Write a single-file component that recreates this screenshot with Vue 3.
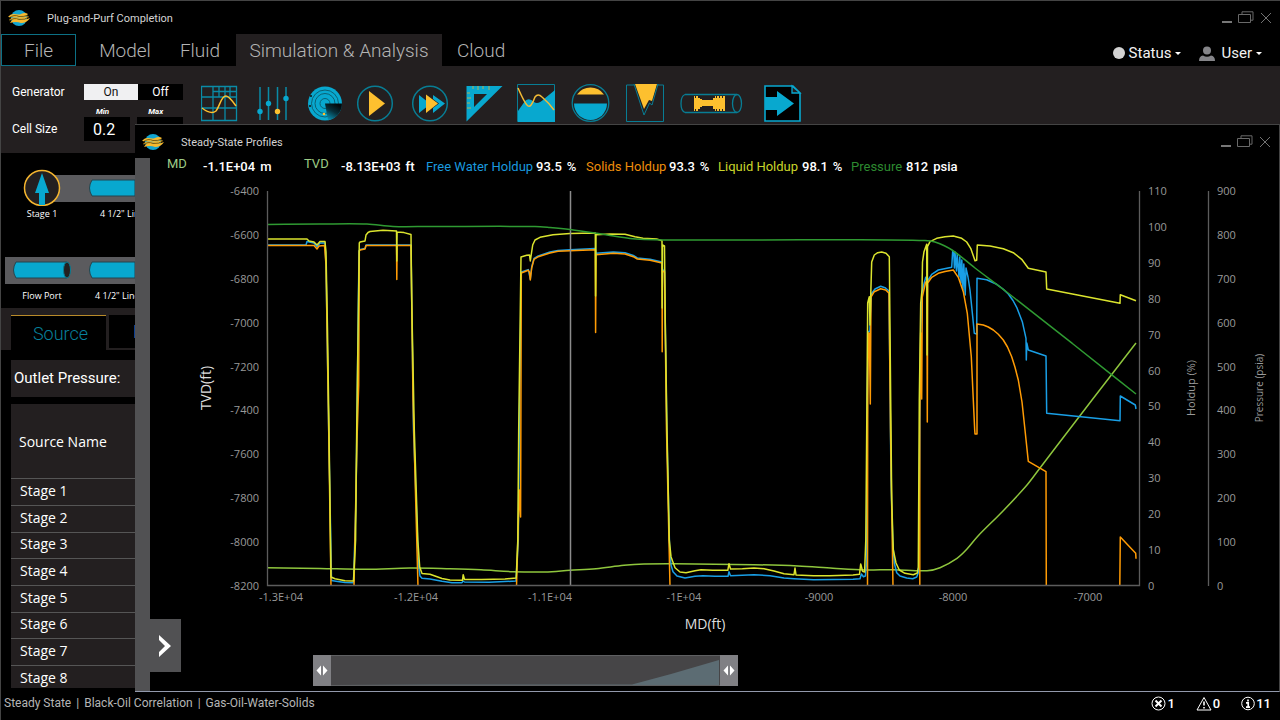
<script setup>
import { ref } from 'vue'

const menus = [
  { name: 'File', cls: 'file' },
  { name: 'Model', cls: 'model' },
  { name: 'Fluid', cls: 'fluid' },
  { name: 'Simulation & Analysis', cls: 'active' },
  { name: 'Cloud', cls: 'cloud' },
]
const generator = ref('On')
const minSize = ref('0.2')
const maxSize = ref('')
const stages = [1, 2, 3, 4, 5, 6, 7, 8].map((n) => `Stage ${n}`)

const readouts = [
  { label: 'MD', value: '-1.1E+04', unit: 'm', cls: 'depth' },
  { label: 'TVD', value: '-8.13E+03', unit: 'ft', cls: 'depth' },
  { label: 'Free Water Holdup', value: '93.5', unit: '%', cls: 'water' },
  { label: 'Solids Holdup', value: '93.3', unit: '%', cls: 'solids' },
  { label: 'Liquid Holdup', value: '98.1', unit: '%', cls: 'liquid' },
  { label: 'Pressure', value: '812', unit: 'psia', cls: 'pressure' },
]

const tvdTicks = Array.from({ length: 10 }, (_, i) => ({ t: String(-6400 - i * 200), y: 191 + (i * 395) / 9 }))
const holdupTicks = Array.from({ length: 12 }, (_, i) => ({ t: String(110 - i * 10), y: 191 + (i * 395) / 11 }))
const pressureTicks = Array.from({ length: 10 }, (_, i) => ({ t: String(900 - i * 100), y: 191 + (i * 395) / 9 }))
const mdTicks = [
  { t: '-1.3E+04', x: 281 }, { t: '-1.2E+04', x: 416 }, { t: '-1.1E+04', x: 550 }, { t: '-1E+04', x: 684 },
  { t: '-9000', x: 819 }, { t: '-8000', x: 953 }, { t: '-7000', x: 1088 },
]

// Turns a list of points into a smooth path that passes through each of them.
function smooth(points) {
  const p = points.split(' ').map((s) => s.split(',').map(Number))
  const slope = (i) => {
    const a = p[Math.max(i - 1, 0)]
    const b = p[Math.min(i + 1, p.length - 1)]
    return (b[1] - a[1]) / (b[0] - a[0])
  }
  let d = `M${p[0]}`
  for (let i = 1; i < p.length; i++) {
    const h = (p[i][0] - p[i - 1][0]) / 3
    d += `C${p[i - 1][0] + h},${p[i - 1][1] + h * slope(i - 1)} ${p[i][0] - h},${p[i][1] - h * slope(i)} ${p[i]}`
  }
  return d
}

const pressure = smooth('267,224.5 320,224 367,224 393,226.5 430,226.5 535,226.5 550,227.5 570,229.5 595,233 610,235.5 630,238.5 645,239.5 664,240 760,240 860,239.7 925,240.5 935,242 952,250 975,268 1008,293 1073,344 1136,394')
const tvd = smooth('267,567.7 320,568.5 367,569.3 410,568 450,568.7 481,569.7 513,571.7 545,572 570,570.3 596,568.7 624,565.3 644,564 675,563.7 754,564.7 798,566 833,568.3 865,570 893,569.7 927,570.7 940,567.7 957,558.3 967,549 978,536 1003,511 1027,485 1040,468 1092,400 1136,343')

const liquid = '267,239 307,239 309,241 314,242 317,245 320,241.5 325,241.5 326,252 327.5,330 329,430 331,577 335,578.7 345,580.7 353.5,581 355.6,540 356.7,430 359.3,243 360,242 365,241 366,235 368,232.5 370,231.5 383,230.3 396.5,231 396.8,261 397.1,232 404,232.6 411,234.5 411.7,300 414.3,430 417.8,540 419.7,567 422,573.5 430,574.3 442,578.5 450,580 462.5,580.3 463.2,574.7 464.5,579.5 481.5,579.6 505,579 516.2,578 517.8,540 518.7,430 521,257 526.7,255.3 529.5,255 530.3,261 532.7,245 535,240 540,237.3 553,234.7 570,233.5 595.3,233 595.6,296 596,234.7 610,234 625,234.3 635,236.7 643,238.3 656.7,239 662,240.7 662.2,308 662.5,245 664.5,246 665.3,323 667,430 669.3,540 671,556.7 675,567.7 680,572 686,572.7 695,570.7 701,569.7 712.7,570.3 727.8,570.3 729,563.7 730.5,569 742.4,568.7 754,568 764,568.7 774,571 784,573.7 794,574.7 795,568 796,575 813.6,575.7 829.5,575.7 853,575 859.5,574.3 860.7,564 862.6,571.3 864.6,572 865.8,540 866.7,430 867.7,303 869.3,296.7 870,325 870.7,296 871.7,262 874.3,255 877.7,252.7 881.7,252 886,253.3 889.3,256.7 890.7,400 891.7,500 893.3,550 896,563 899.3,570 905,573.3 913.3,574.7 917.3,573 918.3,567 919.3,400 920.7,303 922,290 922.5,262 924,251.7 926.7,244.3 927.1,355 927.5,246.7 930,241.7 936.7,238.3 945,236.8 953.3,236 961.7,238.3 966.7,242 970.7,248.3 974,257.7 975,260.7 976.7,260.3 977.3,245 990,246 1003.3,248.7 1013.3,252.7 1021.7,259.3 1028.3,268.3 1046,272 1046.7,289 1120,303.3 1120.3,294.7 1136,300.7'

const solids = '267,245.5 314,245.5 317,249 319,246 324.5,245.5 326,265 328.7,430 331,586.5 354,586.5 357,440 358.7,385 359.3,251 360,250 365,249 366,245.5 396.5,245.5 396.8,279.5 397.1,245.5 411,245.5 413,400 418,586.5 516.5,586.5 519.3,490 520.6,517 521.3,273 528.3,270.3 529.4,272 530.3,280 531.7,268 534,259.3 538.3,256.7 550,253 558,251.3 570,250.7 595.3,249.7 595.6,332.5 596,254.7 613.3,253.3 625,254 633.3,256.7 637.3,259 650,260.3 662,263 662.2,351.7 662.5,271 664.5,272 666.5,430 670,586.5 867.5,586.5 867.7,420 868.3,333 869.3,333 870.3,404 871,297 874.3,291.7 880.7,288.7 885.7,290 889,293.3 890.5,430 893,586.5 919.8,586.5 919.8,420 920.7,333 921.7,399 922.3,297 925.7,282 926.9,282 927.3,422 927.7,283 931.7,277.3 938.3,273.3 945,271.5 953.3,270 958.3,277.3 963.3,291.7 967.3,313.3 971.3,356.7 974.7,430 975,434 977,434 977,324 983.3,325 988.3,327 993.3,330 998.3,334.3 1003.3,340 1007.5,347 1011.7,356.7 1015,367.3 1018.3,380 1022,402 1025,430 1028.3,461.3 1046,471.7 1046.3,586.5 1119.8,586.5 1120.3,537 1135.7,553.3 1136,558.7'

const water = '267,245 306,245 307,241.5 314,243 317,246.8 320,243 325,243 326,265 328.7,430 331.5,580.5 336,581.2 345,582.5 353.5,582.7 356,500 359,251 360,249.5 365,248.5 366,245 411,245 413.5,430 418.5,565 420,576 422,578.3 430,579 442,581.3 452,582.7 462,582.7 463,581 464.5,582 489,582.3 516,581 518.3,540 519.3,430 521.3,272 528.3,269.6 530.3,279 531.7,267 534,258.5 538.3,256 550,252 558,250.5 570,249.8 595.3,248.5 596,253.3 613.3,252 625,252.7 633.3,255.5 637.3,258 650,259.2 662,262 662.5,270 664.5,270.5 666.8,430 669.5,545 671,565 673,571.7 677,576 685,578 695,576.3 703,575.7 715,576.3 728,576.3 729,571.7 730.5,575.7 754,574.7 770,575.7 784,578 794,578.7 813.6,579.7 853,579.3 860,578.7 861.4,574 863.4,576.7 865.4,576 866.6,561.7 867.2,400 868.3,331.5 869.8,331.5 871.3,294 875,289 880.7,286.3 885,287.7 889,291 891,480 892.7,540 894.3,563 896.7,572.7 900,576 906.7,578 912.7,578.7 916.7,577 918.7,571.7 920,400 920.7,332 922,292 925.7,277.3 927.5,281 931.7,274.3 938.3,270 951.7,267.3 952.7,251 953.8,252 954.4,268 955,252 956.5,271 957.2,254 959,277 959.8,257 961,283 961.8,260 963,290 963.8,264 965.2,295 966,268 968,277 970,290 972.7,316.7 974.3,333.3 976.7,334 977,278.3 986.7,279.7 996.7,284.3 1003,289 1008.3,294 1013,300.500 1016.7,307.3 1022.3,321.7 1026,338.3 1026.3,360 1026.8,343 1028.3,350 1046,356 1046.7,413.3 1120,420.7 1120.3,396 1135.3,405 1136,409'
</script>

<template>
  <div class="app">
    <svg class="defs" width="0" height="0" aria-hidden="true">
      <symbol id="logo" viewBox="0 0 22 18">
        <circle cx="11" cy="9" r="8" fill="#12a5d0" />
        <path d="M0 8C5 2 9 7 13 5Q17 3 20 5Q17 9 12 9Q7 8 0 8Z" fill="#f7b92e" />
        <path d="M2 14Q5 9 10 10Q16 12 22 9Q19 14 13 14Q8 12 2 14Z" fill="#f7b92e" />
        <path d="M1 11C6 6 9 10 13 9Q17 8 21 7Q18 11 12 12Q7 10 1 11Z" fill="#f7b92e" />
        <path d="M1 9Q6 5 11 7.500Q16 8 20 6M1 12Q6 8 11 10.500Q17 11 21 8" fill="none" stroke="#57480d" stroke-width=".8" />
      </symbol>
      <symbol id="restore" viewBox="0 0 16 13">
        <path d="M.5 3.500h12v8H.5zM4 3V.8h11v8.400h-2" fill="none" stroke="#696969" />
      </symbol>
      <symbol id="close" viewBox="0 0 12 12">
        <path d="M1 1l10 10M11 1L1 11" stroke="#727272" fill="none" />
      </symbol>
      <symbol id="drag" viewBox="0 0 18 31">
        <path d="M8 10.500v10L3.500 15.500zM10 10.500v10l4.500-5z" fill="#fff" />
      </symbol>
    </svg>

    <header class="titlebar">
      <svg class="logo"><use href="#logo" /></svg>
      <h1>Plug-and-Purf Completion</h1>
      <div class="controls">
        <button aria-label="Minimize"><i class="minimize"></i></button>
        <button aria-label="Restore"><svg width="16" height="13"><use href="#restore" /></svg></button>
        <button aria-label="Close"><svg width="12" height="12"><use href="#close" /></svg></button>
      </div>
    </header>

    <nav class="menubar">
      <button v-for="m in menus" :key="m.name" :class="m.cls">{{ m.name }}</button>
      <div class="account">
        <button><i class="dot"></i>Status<i class="caret"></i></button>
        <button class="user">
          <svg width="16" height="15" viewBox="0 0 16 15"><circle cx="8" cy="4.500" r="4" fill="#858589" /><path d="M0 15Q0 10 4 9.500Q8 12 12 9.500Q16 10 16 15z" fill="#858589" /></svg>
          User<i class="caret"></i>
        </button>
      </div>
    </nav>

    <section class="toolbar">
      <div class="settings">
        <span>Generator</span>
        <div class="toggle">
          <button v-for="o in ['On', 'Off']" :key="o" :class="{ chosen: generator === o }" :aria-pressed="generator === o" @click="generator = o">{{ o }}</button>
        </div>
        <div class="bounds"><label for="min">Min</label><label for="max">Max</label></div>
        <span class="cell">Cell Size</span>
        <div class="sizes"><input id="min" v-model="minSize" /><input id="max" v-model="maxSize" /></div>
      </div>
      <div class="tools">
        <button aria-label="Profile grid">
          <svg width="42" height="38" viewBox="0 0 42 38" fill="none" stroke="#0a8ba6">
            <path d="M.5 2.500h35v34H.5zM12 2v35M24 2v35M0 13h35M0 24h35M12 7.500h23M18 2v11M29 2v11" stroke-width="1.300" />
            <path d="M1 24Q10 31 15 27C19 22 20 12 25 12Q28 12 35 22" stroke="#fdc02f" stroke-width="1.500" />
          </svg>
        </button>
        <button aria-label="Sensitivity">
          <svg width="36" height="38" viewBox="0 0 36 38">
            <path d="M3 3v33M11.500 3v33M20.500 3v33M29 3v33" stroke="#0a8ba6" stroke-width="1.500" />
            <g fill="#08a8cf"><circle cx="3" cy="27.500" r="2.700" /><circle cx="11.500" cy="19.500" r="2.700" /><circle cx="29" cy="14.500" r="2.700" /></g>
            <circle cx="20.500" cy="27.500" r="2.700" fill="#fdc02f" />
          </svg>
        </button>
        <button aria-label="Radar">
          <svg width="36" height="38" viewBox="0 0 36 38">
            <defs><linearGradient id="sweep" x1=".6" y1="0" x2="0" y2="1"><stop offset="0" stop-color="#04090b" /><stop offset=".4" stop-color="#06303b" /><stop offset="1" stop-color="#08a8cf" /></linearGradient></defs>
            <circle cx="18" cy="19.500" r="17" fill="#08a8cf" />
            <g fill="none" stroke="#0b6175"><circle cx="18" cy="19.500" r="13.500" /><circle cx="18" cy="19.500" r="10" /><circle cx="18" cy="19.500" r="5" /></g>
            <path d="M18 19.500h17a17 17 0 0 1-14 16.800z" fill="url(#sweep)" />
            <circle cx="17" cy="30" r="1.300" fill="#fdc02f" /><circle cx="4" cy="12" r="1" fill="#111" /><circle cx="3" cy="22" r="1" fill="#111" />
          </svg>
        </button>
        <button aria-label="Run">
          <svg width="40" height="38" viewBox="0 0 40 38"><circle cx="18" cy="19.500" r="17.300" fill="none" stroke="#087d94" stroke-width="1.500" /><path d="M12 7v25l16-12.500z" fill="#fdc02f" /></svg>
        </button>
        <button aria-label="Run all">
          <svg width="40" height="38" viewBox="0 0 40 38"><circle cx="19" cy="19.500" r="17.300" fill="none" stroke="#087d94" stroke-width="1.500" /><path d="M8 11v18l7-5.500v-7zM22 11v4l6 4.500-6 4.500v5l12-9.500z" fill="#08a8cf" /><path d="M15 10.500v18.500l12-9.500z" fill="#fdc02f" /></svg>
        </button>
        <button aria-label="Measure">
          <svg width="38" height="38" viewBox="0 0 38 38"><path d="M1.500 2h36L1.500 37.500zM9 10v13L22 10z" fill="#08a8cf" fill-rule="evenodd" /><path d="M8 2v3M13 2v4M18 2v3M24 2v4M2 9h3M2 14h4M2 19h3M2 24h4" stroke="#b5b050" /></svg>
        </button>
        <button aria-label="Area chart">
          <svg width="40" height="38" viewBox="0 0 40 38"><path d="M.5.500h37v37H.5z" fill="#231f20" stroke="#087d94" /><path d="M1 27L8 17Q12 13 17 18Q21 21 27 15L38 6v32H1z" fill="#08a8cf" /><path d="M1 4Q8 20 11 22Q14 24 18 13Q21 9 25 13Q32 19 37 26" fill="none" stroke="#f4bc35" stroke-width="1.500" /></svg>
        </button>
        <button aria-label="Cross section">
          <svg width="41" height="38" viewBox="0 0 41 38"><circle cx="19.500" cy="19" r="18.300" fill="none" stroke="#087d94" stroke-width="1.300" /><path d="M6 10.500a16.500 16.500 0 0 1 27 0z" fill="#fdc02f" /><path d="M3 19.500h33a16.500 16.500 0 0 1-33 0z" fill="#08a8cf" /></svg>
        </button>
        <button aria-label="Fracture">
          <svg width="40" height="38" viewBox="0 0 40 38"><path d="M8 1H.5v36.500h37V1H31" fill="none" stroke="#087d94" /><path d="M9 0h22l-5 17-3-1-5 9z" fill="#fdc02f" /><path d="M8 0l10 31 5.500-12 2.500 2L32 0" fill="none" stroke="#087d94" /></svg>
        </button>
        <button aria-label="Core">
          <svg width="70" height="38" viewBox="0 0 70 38"><g fill="none" stroke="#087d94" stroke-width="1.300"><path d="M5 10.500h52M5 28.500h52" /><path d="M5 10.500Q1 12 1 19.500T5 28.500" /><ellipse cx="57" cy="19.500" rx="4.500" ry="9" /></g><path d="M14 12h1v2h1v-2h2v2h2v1h2v1h11v-2h2v-2h1v2h1v-2h2v2h1v-2h2v2h1v-2h2v15h-2v-2h-1v2h-2v-2h-1v2h-2v-2h-1v2h-1v-2h-2v-3H22v1h-2v2h-2v2h-2v-2h-1v2h-1z" fill="#fdc02f" /></svg>
        </button>
        <button aria-label="Export">
          <svg width="38" height="38" viewBox="0 0 38 38"><path d="M1 2h28l7 7v28H1z" fill="#000" stroke="#08a8cf" stroke-width="1.600" /><path d="M28 2v7h8z" fill="#231f20" stroke="#08a8cf" stroke-width="1.300" /><path d="M1 13h12V7l17 12.500L13 32v-6H1z" fill="#08a8cf" /></svg>
        </button>
      </div>
    </section>

    <main>
      <aside class="side">
        <div class="schematic">
          <div class="segment">
            <svg class="pipes" height="44" viewBox="0 0 134 44">
              <path d="M41 13h93v27H41z" fill="#5b5b5e" />
              <path d="M134 18H91Q86 26 91 34h43z" fill="#08a8cf" stroke="#25454e" />
              <circle cx="41" cy="26" r="17.500" fill="#231f20" stroke="#f4b52f" stroke-width="1.500" />
              <path d="M41 11l7 20h-4v12h-6V31h-4z" fill="#08a8cf" />
            </svg>
            <div class="captions"><span>Stage 1</span><span>4 1/2" Liner</span></div>
          </div>
          <div class="segment">
            <svg class="pipes" height="44" viewBox="0 0 134 44">
              <path d="M4 13h130v27H4z" fill="#5b5b5e" />
              <path d="M134 18H91Q86 26 91 34h43zM66 18H15Q10 26 15 34h51z" fill="#08a8cf" stroke="#25454e" />
              <ellipse cx="66" cy="26" rx="3.500" ry="8" fill="#231f20" stroke="#087d94" />
            </svg>
            <div class="captions lower"><span>Flow Port</span><span>4 1/2" Liner</span></div>
          </div>
        </div>
        <div class="tabs"><button class="current">Source</button><button>I</button></div>
        <div class="outlet">Outlet Pressure:</div>
        <table>
          <thead><tr><th>Source Name</th></tr></thead>
          <tbody><tr v-for="s in stages" :key="s"><td>{{ s }}</td></tr></tbody>
        </table>
      </aside>
    </main>

    <section class="window">
      <header class="titlebar sub">
        <svg class="logo"><use href="#logo" /></svg>
        <h2>Steady-State Profiles</h2>
        <div class="controls">
          <button aria-label="Minimize"><i class="minimize"></i></button>
          <button aria-label="Restore"><svg width="16" height="13"><use href="#restore" /></svg></button>
          <button aria-label="Close"><svg width="12" height="12"><use href="#close" /></svg></button>
        </div>
      </header>
      <div class="body">
        <div class="strip"></div>
        <button class="expand" aria-label="Expand panel">
          <svg width="12" height="22" viewBox="0 0 12 22"><path d="M0 0v5l6 6-6 6v5l12-11z" fill="#fff" /></svg>
        </button>
        <div class="profile">
          <div class="readouts">
            <template v-for="r in readouts" :key="r.label">
              <span :class="r.cls">{{ r.label }}</span>
              <span class="value"><b>{{ r.value }}</b><b>{{ r.unit }}</b></span>
            </template>
          </div>
          <svg class="chart" viewBox="150 180 1129 460" role="img" aria-label="Steady-state profiles">
            <clipPath id="plot"><path d="M267 190h873v396H267z" /></clipPath>
            <g class="tick end"><text v-for="k in tvdTicks" :key="k.t" x="259" :y="k.y + 4">{{ k.t }}</text></g>
            <g class="tick"><text v-for="k in holdupTicks" :key="k.t" x="1148" :y="k.y + 4">{{ k.t }}</text></g>
            <g class="tick"><text v-for="k in pressureTicks" :key="k.t" x="1217" :y="k.y + 4">{{ k.t }}</text></g>
            <g class="tick mid"><text v-for="k in mdTicks" :key="k.t" :x="k.x" y="601">{{ k.t }}</text></g>
            <text class="axis" transform="translate(211 388) rotate(-90)">TVD(ft)</text>
            <text class="axis" x="705" y="629">MD(ft)</text>
            <g class="tick mid">
              <text transform="translate(1195 388) rotate(-90)">Holdup (%)</text>
              <text transform="translate(1263 388) rotate(-90)" class="narrow">Pressure (psia)</text>
            </g>
            <g fill="none" stroke-width="1.500" stroke-linejoin="round" clip-path="url(#plot)">
              <path :d="tvd" stroke="#8fc63d" />
              <polyline :points="water" stroke="#199fe6" />
              <polyline :points="solids" stroke="#ff9b05" />
              <polyline :points="liquid" stroke="#dbe42e" />
              <path d="M570.500 191v395" stroke="#8c8c8c" />
              <path :d="pressure" stroke="#2f9a32" />
            </g>
            <path d="M267.500 191v394.500h872v-394.500M1208.500 191v395" fill="none" stroke="#5c5c5c" stroke-width="1.300" />
          </svg>
          <div class="range">
            <button aria-label="Range start"><svg width="18" height="31"><use href="#drag" /></svg></button>
            <svg class="overview" viewBox="0 0 389 31" preserveAspectRatio="none"><path d="M0 30L100 29.500 301 29.500 340 19 388 5V31H0z" fill="#5c6c73" /><path d="M0 .5h389M0 30.500h389" stroke="#5f6062" /></svg>
            <button aria-label="Range end"><svg width="18" height="31"><use href="#drag" /></svg></button>
          </div>
        </div>
      </div>
    </section>

    <footer>
      <div class="modes"><span>Steady State</span><span>|</span><span>Black-Oil Correlation</span><span>|</span><span>Gas-Oil-Water-Solids</span></div>
      <div class="counts">
        <span><svg width="15" height="15" viewBox="0 0 15 15" fill="none" stroke="#fff"><circle cx="7.500" cy="7.500" r="6.500" /><path d="M4.500 4.500l6 6M10.500 4.500l-6 6" stroke-width="2" /></svg>1</span>
        <span><svg width="16" height="15" viewBox="0 0 16 15" fill="none" stroke="#fff"><path d="M8 1.500L15 14H1z" /><path d="M8 5.500v4M8 11v1.500" stroke-width="1.600" /></svg>0</span>
        <span><svg width="14" height="15" viewBox="0 0 14 15" fill="none" stroke="#fff"><circle cx="7" cy="7.500" r="6.300" /><path d="M7 3.500v2M5 6.800h2.200V11M5 11.200h4" stroke-width="1.700" /></svg>11</span>
      </div>
    </footer>
  </div>
</template>

<style>
body { background: #000; }
</style>

<style scoped>
* { box-sizing: border-box; }
.app {
  position: relative; display: flex; flex-direction: column; height: 100vh; min-height: 720px;
  overflow: hidden; background: #000; color: #fff; border-left: 1px solid #444; border-top: 1px solid #444;
  font-family: Roboto, "Liberation Sans", sans-serif; font-size: 13px;
}
.defs { position: absolute; }
button { border: 0; padding: 0; margin: 0; background: none; color: inherit; font: inherit; cursor: pointer; }
svg { display: block; flex: none; }

.titlebar { display: flex; align-items: center; flex: none; height: 33px; padding: 0 8px 0 7px; }
.logo { width: 22px; height: 18px; }
h1, h2 { margin: 0 0 0 17px; padding-top: 2px; font: 400 11px Roboto, "Noto Sans", sans-serif; color: #d4d4d4; }
.controls { display: flex; align-items: center; gap: 6px; margin-left: auto; }
.minimize { display: block; width: 10px; height: 2px; margin-top: 8px; background: #777; }

.menubar { display: flex; flex: none; height: 32px; color: #b4b4b4; font-size: 19px; font-weight: 300; }
.menubar > .file { width: 75px; border: 1px solid #0c7085; }
.menubar > .model { width: 98px; }
.menubar > .fluid { width: 52px; margin-right: 10px; }
.menubar > .active { width: 206px; background: #231f20; }
.menubar > .cloud { padding: 0 15px; }
.account { display: flex; align-items: center; gap: 18px; margin-left: auto; padding: 6px 18px 0 0; color: #f2f2f2; font-size: 15px; font-weight: 400; }
.account button { display: flex; align-items: center; }
.dot { width: 12px; height: 12px; border-radius: 50%; margin-right: 4px; background: #d3d3d3; }
.caret { margin-left: 4px; border: 3px solid transparent; border-top-color: #fff; border-bottom: 0; }
.user svg { margin-right: 6px; }

.toolbar { display: flex; flex: none; height: 87px; padding: 18px 0 0 11px; background: #231f20; }
.settings { display: grid; grid-template-columns: 72px 99px; grid-template-rows: 16px 17px 24px; width: 189px; align-items: center; font-size: 12px; }
.toggle { display: grid; grid-template-columns: 54px 45px; height: 16px; background: #000; }
.toggle .chosen { background: #f0f0f2; color: #111; }
.bounds { grid-column: 2; display: flex; padding: 6px 0 0 12px; gap: 39px; font-size: 8px; font-weight: 700; font-style: italic; }
.sizes { display: flex; gap: 7px; height: 24px; }
.sizes input { width: 46px; border: 0; padding: 0 0 0 9px; background: #000; color: #fff; font: 400 16px Roboto, sans-serif; }
.tools { display: flex; gap: 14px; height: 38px; }

main { flex: 1; min-height: 0; display: flex; margin-bottom: 4px; }
.side { width: 134px; overflow: hidden; font-family: "Open Sans", "Noto Sans", sans-serif; }
.schematic { height: 155px; padding-top: 9px; }
.segment { height: 82px; }
.pipes { width: 134px; }
.captions { display: flex; font-size: 9px; line-height: 12px; margin-top: 2px; white-space: nowrap; }
.captions span { flex: none; }
.captions span:first-child { width: 82px; text-align: center; }
.captions span + span { margin-left: 17px; }
.captions.lower span + span { margin-left: 12px; }
.tabs { display: flex; gap: 3px; height: 42px; padding: 7px 0 0 10px; background: #231f20; font: 300 18px Roboto, sans-serif; }
.tabs button { flex: none; padding: 0 24px; margin-bottom: 2px; background: #000; color: #fff; }
.tabs .current { width: 95px; padding: 0 0 0 4px; margin: 0; border-top: 1px solid #b98b2a; color: #07819d; }
.outlet { height: 37px; margin: 10px 0 7px 10px; padding-left: 3px; background: #231f20; font: 400 15px/36px Roboto, sans-serif; white-space: nowrap; }
table { width: 124px; margin-left: 10px; border-collapse: separate; border-spacing: 0; background: #231f20; font-size: 14px; }
th { height: 74px; padding: 0 8px; text-align: left; font-weight: 400; }
td { height: 27px; padding: 0 9px 4px; line-height: 19px; border-top: 1px solid #555; }
tr:nth-child(3n) td { height: 26px; }

.window { position: absolute; left: 134px; right: 0; top: 123px; bottom: 28px; border: 1px solid #444; border-width: 1px 1px 1px 0; border-bottom-color: #9299ac; background: #000; }
.sub { height: 33px; }
.body { position: relative; display: flex; height: calc(100% - 33px); }
.strip { width: 15px; flex: none; background: #515153; }
.expand { position: absolute; left: 15px; bottom: 19px; width: 31px; height: 53px; padding-left: 9px; background: #515153; }
.profile { flex: 1; min-width: 0; }
.readouts { display: grid; grid-template-columns: 36px 101px 37px 85px 110px 50px 83px 49px 84px 49px 55px 1fr; align-items: start; height: 22px; padding-left: 17px; line-height: 18px; white-space: nowrap; }
.value { display: flex; gap: 5px; }
.value b { font-weight: 500; }
.readouts .depth { color: #9dcb86; line-height: 12px; }
.water { color: #1a99de; }
.solids { color: #ef8e0c; }
.liquid { color: #c9d62b; }
.pressure { color: #2d8a30; }
.chart { width: 100%; font-family: "Open Sans", "Noto Sans", sans-serif; }
.tick { font-size: 11px; fill: #999; }
.end { text-anchor: end; }
.mid { text-anchor: middle; }
.narrow { font-size: 10px; }
.axis { font-size: 14px; fill: #ddd; text-anchor: middle; }
.range { display: flex; width: 425px; height: 31px; margin: 15px 0 0 163px; }
.range button { background: #808084; }
.overview { flex: 1; min-width: 0; height: 31px; background: #464547; }

footer { display: flex; flex: none; align-items: center; justify-content: space-between; height: 28px; padding: 0 9px 6px 3px; color: #b5b5b5; font-size: 12px; }
.modes { display: flex; gap: 5px; }
.counts { display: flex; gap: 21px; color: #fff; font-size: 13px; font-weight: 500; }
.counts span { display: flex; align-items: center; gap: 1px; }
</style>
